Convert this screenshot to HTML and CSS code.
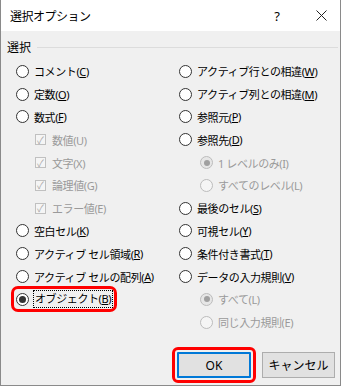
FILE: index.html
```html
<!DOCTYPE html>
<html lang="ja">
<head>
  <meta charset="UTF-8" />
  <title>選択オプション</title>
  <link rel="stylesheet" href="styles.css">
</head>
<body>
<div class="dialog">
  <div class="titlebar">
    <span class="title">選択オプション</span>
    <span class="help">?</span>
    <span class="close">
      <svg width="11" height="11" viewBox="0 0 11 11"><path d="M0.5 0.5 L10.5 10.5 M10.5 0.5 L0.5 10.5" stroke="#222" stroke-width="1"/></svg>
    </span>
  </div>

  <div class="content">
    <div class="group-label"><span>選択</span><span class="group-line"></span></div>

    <div class="options">
      <div class="col">
        <label class="row"><span class="radio"></span>コメント(<u>C</u>)</label>
        <label class="row"><span class="radio"></span>定数(<u>O</u>)</label>
        <label class="row"><span class="radio"></span>数式(<u>F</u>)</label>
        <label class="row sub off"><span class="check">✓</span>数値(U)</label>
        <label class="row sub off"><span class="check">✓</span>文字(X)</label>
        <label class="row sub off"><span class="check">✓</span>論理値(G)</label>
        <label class="row sub off"><span class="check">✓</span>エラー値(E)</label>
        <label class="row"><span class="radio"></span>空白セル(<u>K</u>)</label>
        <label class="row"><span class="radio"></span>アクティブ&nbsp;セル領域(<u>R</u>)</label>
        <label class="row"><span class="radio"></span>アクティブ&nbsp;セルの配列(<u>A</u>)</label>
        <div class="row"><label class="marked"><span class="radio on"></span><span class="focus">オブジェクト(<u>B</u>)</span></label></div>
      </div>
      <div class="col">
        <label class="row"><span class="radio"></span>アクティブ行との相違(<u>W</u>)</label>
        <label class="row"><span class="radio"></span>アクティブ列との相違(<u>M</u>)</label>
        <label class="row"><span class="radio"></span>参照元(<u>P</u>)</label>
        <label class="row"><span class="radio"></span>参照先(<u>D</u>)</label>
        <label class="row sub2 off"><span class="radio on"></span>1&nbsp;レベルのみ(I)</label>
        <label class="row sub2 off"><span class="radio"></span>すべてのレベル(L)</label>
        <label class="row"><span class="radio"></span>最後のセル(<u>S</u>)</label>
        <label class="row"><span class="radio"></span>可視セル(<u>Y</u>)</label>
        <label class="row"><span class="radio"></span>条件付き書式(<u>T</u>)</label>
        <label class="row"><span class="radio"></span>データの入力規則(<u>V</u>)</label>
        <label class="row sub2 off"><span class="radio on"></span>すべて(L)</label>
        <label class="row sub2 off"><span class="radio"></span>同じ入力規則(E)</label>
      </div>
    </div>
  </div>

  <div class="buttons">
    <button class="btn default">OK</button>
    <button class="btn">キャンセル</button>
  </div>
</div>
</body>
</html>
```

FILE: styles.css
```css
body { margin: 0; background: #fff; font-family: "Noto Sans", "Noto Sans CJK JP", sans-serif; font-size: 11px; color: #000; }
.dialog { width: 341px; height: 386px; box-sizing: border-box; border: 1px solid #8a8a8a; border-top: none; background: #f0f0f0; position: relative; }
.titlebar { height: 31px; background: #fff; display: flex; align-items: center; font-size: 12px; }
.title { margin-left: 9px; flex: 1; letter-spacing: -0.5px; }
.help { width: 30px; text-align: center; font-size: 13px; margin-right: 14px; }
.close { width: 30px; display: flex; justify-content: center; margin-right: 4px; }

.content { padding: 8px 2px 0 6px; }
.group-label { display: flex; align-items: center; height: 16px; font-size: 12px; }
.group-line { flex: 1; border-top: 1px solid #dcdcdc; margin-left: 6px; margin-top: 1px; }

.options { display: grid; grid-template-columns: 163px 1fr; padding: 5px 0 0 9px; }
.row { height: 22.8px; display: flex; align-items: center; white-space: nowrap; letter-spacing: -0.4px; }
.row u { text-decoration-thickness: 1px; text-underline-offset: 1px; }
.sub { padding-left: 19px; }
.sub2 { padding-left: 21px; }
.off { color: #9a9a9a; }

.radio { width: 13px; height: 13px; box-sizing: border-box; border: 1px solid #333; border-radius: 50%; background: #fff; margin-right: 5px; display: inline-flex; align-items: center; justify-content: center; flex: none; }
.radio.on::after { content: ""; width: 7px; height: 7px; border-radius: 50%; background: #333; }
.off .radio { border-color: #bcbcbc; background: #f5f5f5; }
.off .radio.on { background: #e6e6e6; }
.off .radio.on::after { background: #a0a0a0; width: 6px; height: 6px; }

.check { width: 11px; height: 11px; box-sizing: border-box; border: 1px solid #c0c0c0; background: #f5f5f5; margin-right: 6px; display: inline-flex; align-items: center; justify-content: center; font-size: 10px; line-height: 1; color: #a8a8a8; flex: none; letter-spacing: 0; }

.marked { display: inline-flex; align-items: center; outline: 3px solid #f00; outline-offset: 2px; border-radius: 2px; }
.focus { outline: 1px dotted #000; padding: 0 1px; line-height: 16px; }

.buttons { position: absolute; right: 5px; top: 352px; display: flex; gap: 11px; }
.btn { width: 73px; height: 26px; box-sizing: border-box; border: 1px solid #adadad; background: #e1e1e1; font-family: inherit; font-size: 12px; color: #000; padding: 0; }
.btn.default { width: 74px; border: 2px solid #0078d7; outline: 3px solid #f00; outline-offset: 2px; border-radius: 1px; }
```
